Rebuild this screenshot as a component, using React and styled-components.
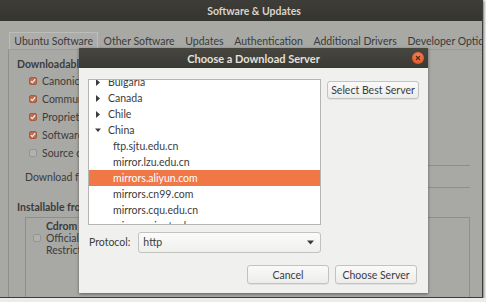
import styled, { createGlobalStyle } from "styled-components";

const GlobalStyle = createGlobalStyle`
  html, body {
    margin: 0;
    padding: 0;
    background: #ececea;
  }
  body {
    font-family: Lato, "Open Sans", "DejaVu Sans", sans-serif;
    font-size: 10.5px;
    color: #3c3c3c;
  }
`;

const Window = styled.div`
  position: relative;
  width: 482px;
  height: 297px;
  background: #a8a8a5;
  border-right: 1px solid #3d3d3b;
  border-bottom: 1px solid #3d3d3b;
  box-shadow: 1px 1px 2px rgba(0, 0, 0, 0.5);
  overflow: hidden;
  display: flex;
  flex-direction: column;
`;

const TitleBar = styled.div`
  height: 21px;
  flex: none;
  background: linear-gradient(#3e3d39, #35342f);
  color: #d8d4cb;
  font-weight: bold;
  font-size: 10.5px;
  display: flex;
  align-items: center;
  justify-content: center;
  padding-left: 26px;
`;

const Tabs = styled.div`
  display: flex;
  padding: 11px 0 0 9px;
  height: 17px;
  flex: none;
  white-space: nowrap;
`;

const Tab = styled.div`
  padding: 0 4.3px;
  height: 16px;
  line-height: 16px;
  color: #3a3a3a;
  border: 1px solid ${(p) => (p.$active ? "#bdbdba" : "transparent")};
  border-bottom: none;
  background: ${(p) => (p.$active ? "#acacaa" : "transparent")};
`;

const Panel = styled.div`
  flex: 1;
  margin-left: 8px;
  border-left: 1px solid #8f8f8d;
  border-top: 1px solid #9a9a98;
  padding: 6px 0 0 8px;
  display: flex;
  flex-direction: column;
  overflow: hidden;
`;

const Heading = styled.div`
  font-weight: bold;
  height: 16px;
  line-height: 16px;
  margin-top: ${(p) => p.$top || 0}px;
  white-space: nowrap;
`;

const CheckRow = styled.div`
  display: flex;
  align-items: center;
  gap: 5px;
  height: 18px;
  padding-left: 12px;
  white-space: nowrap;
`;

const DownloadRow = styled.div`
  display: flex;
  align-items: center;
  height: 23px;
  padding-left: 8px;
  margin-top: 3px;
  gap: 12px;
  white-space: nowrap;
`;

const BgCombo = styled.div`
  flex: 1;
  margin-right: 12px;
  height: 21px;
  border-top: 1px solid #8e8e8c;
  border-bottom: 1px solid #8e8e8c;
`;

const CdBox = styled.div`
  flex: 1;
  margin: 2px 12px 0 8px;
  border: 1px solid #8e8e8c;
  border-bottom: none;
  display: flex;
  gap: 5px;
  padding: 2px 0 0 7px;
`;

const CdCheck = styled.div`
  padding-top: 12px;
`;

const CdText = styled.div`
  line-height: 12px;
  white-space: nowrap;
`;

const Dialog = styled.div`
  position: absolute;
  left: 79px;
  top: 48px;
  width: 349px;
  height: 245px;
  background: #f0f0ef;
  box-shadow: 0 1px 3px rgba(0, 0, 0, 0.45);
  display: flex;
  flex-direction: column;
`;

const DialogTitle = styled.div`
  position: relative;
  height: 20px;
  flex: none;
  background: linear-gradient(#47463f, #3a3935);
  color: #e4e1da;
  font-weight: bold;
  font-size: 11px;
  display: flex;
  align-items: center;
  justify-content: center;
`;

const CloseButton = styled.div`
  position: absolute;
  right: 4px;
  top: 4px;
  width: 12px;
  height: 12px;
  border-radius: 50%;
  background: radial-gradient(circle at 50% 35%, #f58a5c, #e05a2b 70%, #b8441c);
  display: flex;
  align-items: center;
  justify-content: center;
`;

const DialogBody = styled.div`
  flex: 1;
  display: grid;
  grid-template-columns: 233px 90px;
  grid-template-rows: 146px 20px 1fr;
  column-gap: 6px;
  row-gap: 7px;
  padding: 11px 11px 8px 9px;
`;

const ServerList = styled.div`
  grid-column: 1;
  grid-row: 1;
  background: #ffffff;
  border: 1px solid #b5b5b3;
  overflow: hidden;
`;

const ListInner = styled.div`
  margin-top: -6px;
`;

const Row = styled.div`
  height: 16px;
  line-height: 16px;
  display: flex;
  align-items: center;
  padding-left: ${(p) => p.$indent}px;
  background: ${(p) => (p.$selected ? "#f07746" : "transparent")};
  color: ${(p) => (p.$selected ? "#ffffff" : "#3c3c3c")};
  white-space: nowrap;
`;

const Expander = styled.span`
  width: 8px;
  display: inline-flex;
  justify-content: center;
  margin-right: 6px;
`;

const Button = styled.div`
  height: ${(p) => (p.$small ? 16 : 17)}px;
  width: ${(p) => p.$width || 80}px;
  border: 1px solid #c2c2c0;
  border-radius: 3px;
  background: linear-gradient(#fafafa, #ececeb);
  box-shadow: 0 1px 0 rgba(0, 0, 0, 0.06);
  display: flex;
  align-items: center;
  justify-content: center;
  color: #3c3c3c;
  white-space: nowrap;
`;

const SideColumn = styled.div`
  grid-column: 2;
  grid-row: 1 / 3;
  padding-top: 2px;
`;

const ProtocolRow = styled.div`
  grid-column: 1;
  grid-row: 2;
  display: flex;
  align-items: center;
  gap: 8px;
  padding-left: 1px;
`;

const Combo = styled.div`
  flex: 1;
  height: 19px;
  border: 1px solid #c2c2c0;
  border-radius: 3px;
  background: linear-gradient(#fbfbfb, #efefee);
  display: flex;
  align-items: center;
  justify-content: space-between;
  padding: 0 6px 0 4px;
`;

const Actions = styled.div`
  grid-column: 1 / 3;
  grid-row: 3;
  display: flex;
  justify-content: flex-end;
  align-items: flex-start;
  gap: 6px;
  padding-top: 6px;
`;

const CheckBox = ({ checked }) => (
  <svg width="8" height="8" viewBox="0 0 8 8">
    <rect
      x="0.5"
      y="0.5"
      width="7"
      height="7"
      rx="1.5"
      fill={checked ? "#bd6d50" : "#b1b1ae"}
      stroke={checked ? "#a85a3d" : "#959593"}
    />
    {checked && <path d="M1.8 4.1 L3.3 5.6 L6.2 2.3" fill="none" stroke="#eee" strokeWidth="1.3" />}
  </svg>
);

const Triangle = ({ open }) => (
  <svg width="6" height="7" viewBox="0 0 6 7">
    {open ? <polygon points="0,1.5 6,1.5 3,5" fill="#3c3c3c" /> : <polygon points="1,0 5,3.5 1,7" fill="#3c3c3c" />}
  </svg>
);

const rows = [
  { label: "Bulgaria", level: 0 },
  { label: "Canada", level: 0 },
  { label: "Chile", level: 0 },
  { label: "China", level: 0, open: true },
  { label: "ftp.sjtu.edu.cn", level: 1 },
  { label: "mirror.lzu.edu.cn", level: 1 },
  { label: "mirrors.aliyun.com", level: 1, selected: true },
  { label: "mirrors.cn99.com", level: 1 },
  { label: "mirrors.cqu.edu.cn", level: 1 },
  { label: "mirrors.njupt.edu.cn", level: 1 },
];

const App = () => {
  return (
    <>
      <GlobalStyle />
      <Window>
        <TitleBar>Software &amp; Updates</TitleBar>
        <Tabs>
          <Tab $active>Ubuntu Software</Tab>
          <Tab>Other Software</Tab>
          <Tab>Updates</Tab>
          <Tab>Authentication</Tab>
          <Tab>Additional Drivers</Tab>
          <Tab>Developer Options</Tab>
        </Tabs>
        <Panel>
          <Heading>Downloadable from the Internet</Heading>
          <CheckRow>
            <CheckBox checked />
            Canonical-supported free and open-source software (main)
          </CheckRow>
          <CheckRow>
            <CheckBox checked />
            Community-maintained free and open-source software (universe)
          </CheckRow>
          <CheckRow>
            <CheckBox checked />
            Proprietary drivers for devices (restricted)
          </CheckRow>
          <CheckRow>
            <CheckBox checked />
            Software restricted by copyright or legal issues (multiverse)
          </CheckRow>
          <CheckRow>
            <CheckBox />
            Source code
          </CheckRow>
          <DownloadRow>
            Download from:
            <BgCombo />
          </DownloadRow>
          <Heading $top={11}>Installable from CD-ROM/DVD</Heading>
          <CdBox>
            <CdCheck>
              <CheckBox />
            </CdCheck>
            <CdText>
              <b>Cdrom with Ubuntu 16.04 'Xenial Xerus'</b>
              <br />
              Officially supported
              <br />
              Restricted copyright
            </CdText>
          </CdBox>
        </Panel>

        <Dialog>
          <DialogTitle>
            Choose a Download Server
            <CloseButton>
              <svg width="6" height="6" viewBox="0 0 6 6">
                <path d="M1 1 L5 5 M5 1 L1 5" stroke="#5b2412" strokeWidth="1.2" />
              </svg>
            </CloseButton>
          </DialogTitle>
          <DialogBody>
            <ServerList>
              <ListInner>
                {rows.map((r) => (
                  <Row key={r.label} $indent={r.level ? 24 : 5} $selected={r.selected}>
                    {r.level === 0 && (
                      <Expander>
                        <Triangle open={r.open} />
                      </Expander>
                    )}
                    {r.label}
                  </Row>
                ))}
              </ListInner>
            </ServerList>
            <SideColumn>
              <Button $small $width={90}>
                Select Best Server
              </Button>
            </SideColumn>
            <ProtocolRow>
              Protocol:
              <Combo>
                http
                <svg width="7" height="5" viewBox="0 0 7 5">
                  <polygon points="0,0.5 7,0.5 3.5,4.5" fill="#3c3c3c" />
                </svg>
              </Combo>
            </ProtocolRow>
            <Actions>
              <Button>Cancel</Button>
              <Button>Choose Server</Button>
            </Actions>
          </DialogBody>
        </Dialog>
      </Window>
    </>
  );
};

export default App;
